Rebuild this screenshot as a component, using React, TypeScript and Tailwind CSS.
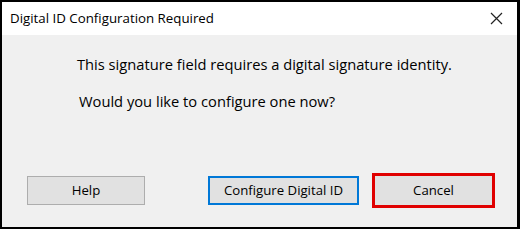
export default function App() {
  return (
    <div className="w-[524px] h-[232px] bg-white" style={{ fontFamily: '"Open Sans", "Noto Sans", sans-serif' }}>
      <div className="w-[520px] h-[229px] flex flex-col border-2 border-r-[3px] border-black bg-[#f0f0f0]">
        <div className="h-[33px] bg-white flex items-center justify-between pl-[8px] pr-[14px]">
          <span className="text-[13.3px] text-black">Digital ID Configuration Required</span>
          <svg width="13" height="13" viewBox="0 0 13 13" className="text-[#222]">
            <path d="M1 1 L12 12 M12 1 L1 12" stroke="currentColor" strokeWidth="1.2" />
          </svg>
        </div>
        <div className="flex-1 flex flex-col">
          <p className="mt-[18px] ml-[75px] text-[14.7px] text-black">
            This signature field requires a digital signature identity.
          </p>
          <p className="mt-[15px] ml-[77px] text-[14.7px] text-black">Would you like to configure one now?</p>
          <div className="mt-auto mb-[19px] flex items-center">
            <button className="ml-[25px] w-[118px] h-[29px] bg-[#e1e1e1] border border-[#adadad] text-[13.2px] text-black">
              Help
            </button>
            <button className="ml-[63px] w-[151px] h-[29px] bg-[#e1e1e1] border-2 border-[#0078d7] text-[13.2px] text-black">
              Configure Digital ID
            </button>
            <div className="ml-[13px] w-[123px] h-[35px] border-[3px] border-[#e00000] bg-[#e1e1e1] flex items-center justify-center text-[13.2px] text-black">
              Cancel
            </div>
          </div>
        </div>
      </div>
    </div>
  );
}
